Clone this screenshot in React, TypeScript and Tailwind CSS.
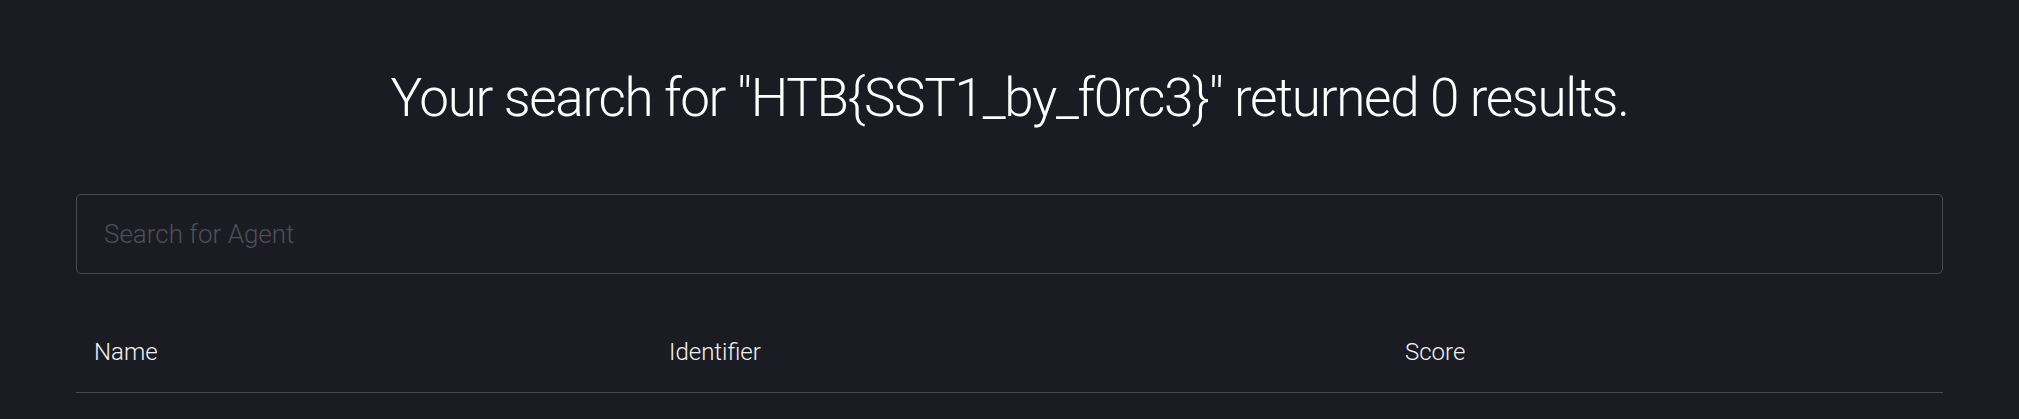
import React from 'react';

const columns = [
  { label: 'Name', width: 'w-[575px]' },
  { label: 'Identifier', width: 'w-[736px]' },
  { label: 'Score', width: '' },
];

const SearchResults: React.FC<{ query: string; count: number }> = ({ query, count }) => {
  return (
    <div className="min-h-screen bg-[#1b1c23] px-[76px] font-['Roboto',sans-serif] font-light text-white">
      <h1 className="pt-[67px] text-center text-[53px] font-light leading-[1.2] tracking-[-1.3px]">
        Your search for "{query}" returned {count} results.
      </h1>

      <div className="mt-[63px]">
        <input
          type="text"
          placeholder="Search for Agent"
          className="h-[80px] w-full rounded-[5px] border border-[#4a4a50] bg-transparent px-[27px] text-[26px] font-light text-white outline-none placeholder:text-[#4e4f57]"
        />
      </div>

      <table className="mt-[37px] w-full table-fixed border-collapse">
        <thead>
          <tr className="border-b border-[#4a4a50]">
            {columns.map((col) => (
              <th
                key={col.label}
                className={`${col.width} pt-[23px] pb-[22px] pl-[18px] pr-[18px] text-left text-[24px] font-light leading-[36px] text-[#f2f2f2]`}
              >
                {col.label}
              </th>
            ))}
          </tr>
        </thead>
        <tbody></tbody>
      </table>
    </div>
  );
};

export default function App() {
  return <SearchResults query="HTB{SST1_by_f0rc3}" count={0} />;
}
